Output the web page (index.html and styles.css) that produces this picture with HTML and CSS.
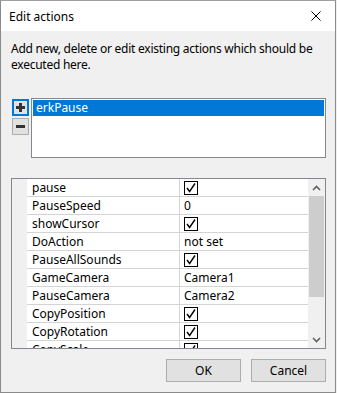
FILE: index.html
```html
<!DOCTYPE html>
<html lang="en">
<head>
<meta charset="UTF-8">
<meta name="viewport" content="width=device-width, initial-scale=1.0">
<title>Edit actions</title>
<link rel="stylesheet" href="styles.css">
</head>
<body>

<div class="dialog">
  <div class="titlebar">
    <span class="title">Edit actions</span>
    <svg class="close" width="10" height="10" viewBox="0 0 10 10">
      <path d="M0.5 0.5 L9.5 9.5 M9.5 0.5 L0.5 9.5" stroke="#000" stroke-width="1" fill="none"/>
    </svg>
  </div>

  <div class="content">
    <p class="intro">Add new, delete or edit existing actions which should be<br>executed here.</p>

    <div class="actions">
      <div class="tools">
        <button class="tool active" type="button">
          <svg width="11" height="11" viewBox="0 0 11 11"><path d="M5.5 1 V10 M1 5.5 H10" stroke="#333" stroke-width="3"/></svg>
        </button>
        <button class="tool" type="button">
          <svg width="11" height="11" viewBox="0 0 11 11"><path d="M1 5.5 H10" stroke="#333" stroke-width="3"/></svg>
        </button>
      </div>
      <div class="action-list">
        <div class="action-item selected">erkPause</div>
      </div>
    </div>

    <div class="props">
      <div class="props-body">
        <div class="row"><div class="name">pause</div><div class="value"><span class="check"></span></div></div>
        <div class="row"><div class="name">PauseSpeed</div><div class="value">0</div></div>
        <div class="row"><div class="name">showCursor</div><div class="value"><span class="check"></span></div></div>
        <div class="row"><div class="name">DoAction</div><div class="value">not set</div></div>
        <div class="row"><div class="name">PauseAllSounds</div><div class="value"><span class="check"></span></div></div>
        <div class="row"><div class="name">GameCamera</div><div class="value">Camera1</div></div>
        <div class="row"><div class="name">PauseCamera</div><div class="value">Camera2</div></div>
        <div class="row"><div class="name">CopyPosition</div><div class="value"><span class="check"></span></div></div>
        <div class="row"><div class="name">CopyRotation</div><div class="value"><span class="check"></span></div></div>
        <div class="row"><div class="name">CopyScale</div><div class="value"><span class="check"></span></div></div>
      </div>
      <div class="scrollbar">
        <svg class="arrow" width="9" height="6" viewBox="0 0 9 6"><path d="M1 5 L4.5 1.5 L8 5" stroke="#606060" stroke-width="1.6" fill="none"/></svg>
        <div class="thumb"></div>
        <div class="track"></div>
        <svg class="arrow" width="9" height="6" viewBox="0 0 9 6"><path d="M1 1 L4.5 4.5 L8 1" stroke="#606060" stroke-width="1.6" fill="none"/></svg>
      </div>
    </div>

    <div class="footer">
      <button class="btn" type="button">OK</button>
      <button class="btn" type="button">Cancel</button>
    </div>
  </div>
</div>

</body>
</html>
```

FILE: styles.css
```css
/* dialog */
body, html {
  margin: 0;
  background-color: #f0f0f0;
}

body {
  font-family: "Noto Sans", "Open Sans", sans-serif;
  font-size: 12px;
  color: #000000;
}

.dialog {
  width: 336px;
  height: 393px;
  box-sizing: border-box;
  border: 1px solid #8a8a8a;
  border-top-color: #a0a0a0;
  display: flex;
  flex-direction: column;
  background-color: #f0f0f0;
}

.titlebar {
  height: 30px;
  background-color: #ffffff;
  display: flex;
  align-items: center;
  padding: 0 10px 0 8px;
  justify-content: space-between;
}

.title {
  font-size: 12px;
}

.close {
  margin-right: 4px;
}

.content {
  padding: 10px 9px 0 10px;
}

.intro {
  margin: 0;
  line-height: 16px;
  letter-spacing: -0.25px;
  white-space: nowrap;
}

.actions {
  display: flex;
  margin-top: 25px;
  height: 60px;
}

.tools {
  margin: 1px 2px 0 1px;
  display: flex;
  flex-direction: column;
  gap: 2px;
}

.tool {
  width: 17px;
  height: 17px;
  padding: 0;
  border: 1px solid #adadad;
  background-color: #e1e1e1;
  display: flex;
  align-items: center;
  justify-content: center;
  box-sizing: border-box;
}

.tool.active {
  border: 2px solid #0078d7;
}

.action-list {
  width: 295px;
  box-sizing: border-box;
  border: 1px solid #828790;
  background-color: #ffffff;
  padding: 1px;
}

.action-item {
  height: 16px;
  line-height: 16px;
  padding-left: 3px;
}

.action-item.selected {
  background-color: #0078d7;
  color: #ffffff;
}

/* property grid */
.props {
  margin-top: 20px;
  width: 315px;
  height: 171px;
  box-sizing: border-box;
  border: 1px solid #828790;
  display: flex;
  background-color: #ffffff;
}

.props-body {
  flex: 1;
  overflow: hidden;
  background-color: #f0f0f0;
  padding-left: 15px;
}

.row {
  display: flex;
  height: 17px;
  border-bottom: 1px solid #d4d4d4;
  background-color: #ffffff;
}

.name {
  width: 147px;
  padding-left: 5px;
  border-right: 1px solid #d4d4d4;
  line-height: 17px;
  white-space: nowrap;
}

.value {
  flex: 1;
  padding-left: 4px;
  line-height: 17px;
  display: flex;
  align-items: center;
}

.check {
  width: 14px;
  height: 14px;
  box-sizing: border-box;
  border: 1px solid #000000;
  background: #ffffff url("data:image/svg+xml,%3Csvg xmlns='http://www.w3.org/2000/svg' width='12' height='12' viewBox='0 0 12 12'%3E%3Cpath d='M2 6 L4.6 9.5 L10 1.5' stroke='%23000' stroke-width='1.4' fill='none'/%3E%3C/svg%3E") no-repeat center;
}

.scrollbar {
  width: 17px;
  background-color: #f0f0f0;
  display: flex;
  flex-direction: column;
  align-items: center;
}

.arrow {
  height: 17px;
  flex: none;
  padding: 6px 0 5px;
  box-sizing: border-box;
}

.thumb {
  width: 15px;
  height: 101px;
  background-color: #cdcdcd;
}

.track {
  flex: 1;
}

.footer {
  display: flex;
  justify-content: flex-end;
  gap: 10px;
  margin-top: 10px;
}

.btn {
  width: 75px;
  height: 23px;
  font-family: inherit;
  font-size: 12px;
  border: 1px solid #adadad;
  background-color: #e1e1e1;
  color: #000000;
  padding: 0;
}
```
